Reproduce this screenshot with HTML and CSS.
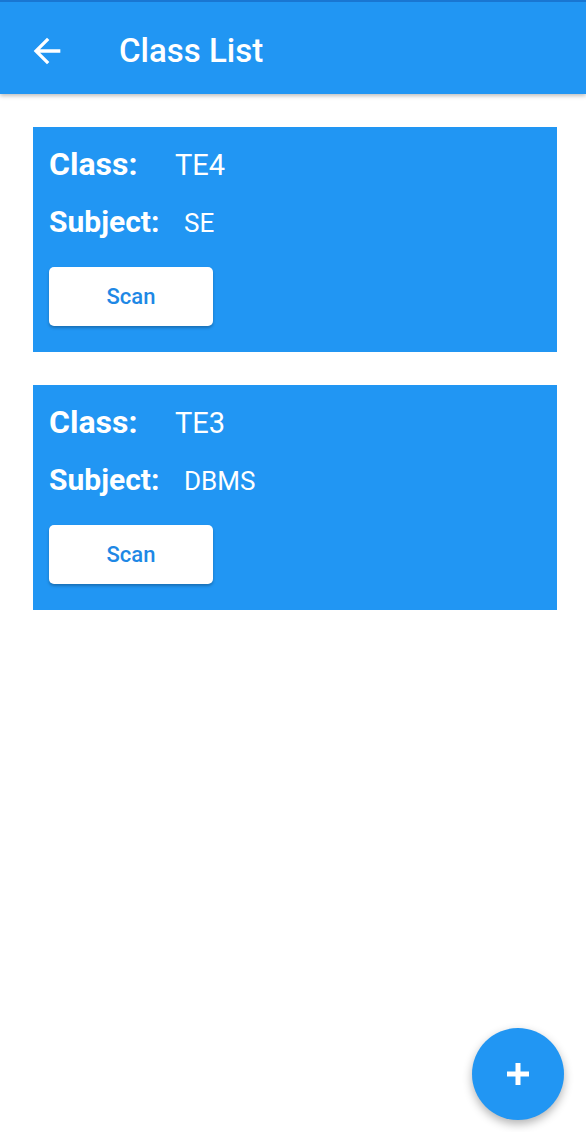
FILE: index.html
```html
<!DOCTYPE html>
<html>
<head>
<meta charset="utf-8">
<link rel="stylesheet" href="styles.css">
</head>
<body>
<header class="appbar">
  <svg class="back" width="40" height="40" viewBox="0 0 24 24"><path d="M20 11H7.83l5.59-5.59L12 4l-8 8 8 8 1.41-1.41L7.83 13H20v-2z" fill="#fff"/></svg>
  <h1 class="title">Class List</h1>
</header>
<main class="list">
  <section class="card">
    <div class="row row-class"><span class="label">Class:</span><span class="value">TE4</span></div>
    <div class="row row-subject"><span class="label">Subject:</span><span class="value">SE</span></div>
    <button class="scan">Scan</button>
  </section>
  <section class="card">
    <div class="row row-class"><span class="label">Class:</span><span class="value">TE3</span></div>
    <div class="row row-subject"><span class="label">Subject:</span><span class="value">DBMS</span></div>
    <button class="scan">Scan</button>
  </section>
</main>
<button class="fab"><svg width="22" height="22" viewBox="0 0 22 22"><rect x="8.5" y="0" width="5" height="22" fill="#fff"/><rect x="0" y="8.5" width="22" height="5" fill="#fff"/></svg></button>
</body>
</html>
```
FILE: styles.css
```css
* { box-sizing: border-box; }
html, body { margin: 0; padding: 0; }
body {
  width: 586px;
  height: 1132px;
  background: #fff;
  font-family: Roboto, "Noto Sans", sans-serif;
  position: relative;
  overflow: hidden;
}
.appbar {
  height: 94px;
  background: #2196F3;
  border-top: 2px solid #1976D2;
  display: flex;
  align-items: flex-start;
  padding-left: 27px;
  box-shadow: 0 2px 4px rgba(0,0,0,0.25);
}
.back { display: block; margin-top: 29px; }
.title {
  margin: 30px 0 0 52px;
  color: #fff;
  font-size: 33px;
  line-height: 38px;
  font-weight: 500;
}
.list {
  padding: 33px 29px 0 33px;
  display: flex;
  flex-direction: column;
  gap: 33px;
}
.card {
  background: #2196F3;
  height: 225px;
  padding: 18px 16px 0 16px;
  color: #fff;
}
.row { display: flex; align-items: baseline; }
.row-class { line-height: 38px; }
.row-class .label { font-size: 32px; font-weight: 700; width: 126px; }
.row-class .value { font-size: 29px; }
.row-subject { margin-top: 20px; line-height: 36px; }
.row-subject .label { font-size: 30px; font-weight: 700; width: 135px; }
.row-subject .value { font-size: 26px; }
.scan {
  display: block;
  margin-top: 26px;
  width: 164px;
  height: 59px;
  border: none;
  border-radius: 5px;
  background: #fff;
  color: #1E88E5;
  font-family: Roboto, sans-serif;
  font-size: 22px;
  font-weight: 500;
  box-shadow: 0 2px 3px rgba(0,0,0,0.25);
}
.fab {
  position: absolute;
  left: 472px;
  top: 1028px;
  width: 92px;
  height: 92px;
  border-radius: 50%;
  border: none;
  background: #2196F3;
  display: flex;
  align-items: center;
  justify-content: center;
  box-shadow: 0 4px 10px rgba(0,0,0,0.3);
}
```
